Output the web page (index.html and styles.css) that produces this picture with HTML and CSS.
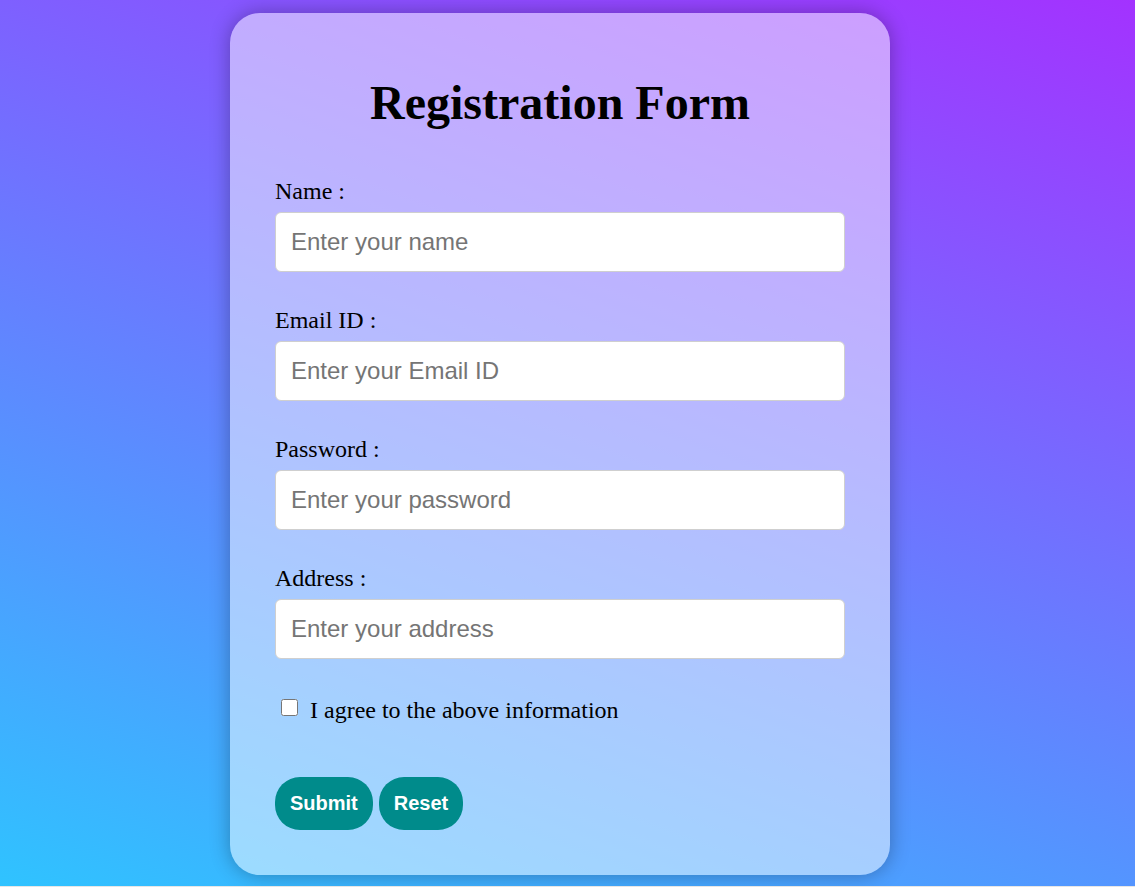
FILE: index.html
```html
<!DOCTYPE html>
<html>
<head>
<meta charset="utf-8">
<title>Registration Form</title>
<link rel="stylesheet" href="styles.css">
</head>
<body>
<div class="card">
  <h1 class="title">Registration Form</h1>
  <form class="form">
    <div class="field">
      <label class="label" for="name">Name :</label>
      <input class="input" id="name" type="text" placeholder="Enter your name">
    </div>
    <div class="field">
      <label class="label" for="email">Email ID :</label>
      <input class="input" id="email" type="text" placeholder="Enter your Email ID">
    </div>
    <div class="field">
      <label class="label" for="pass">Password :</label>
      <input class="input" id="pass" type="password" placeholder="Enter your password">
    </div>
    <div class="field">
      <label class="label" for="addr">Address :</label>
      <input class="input" id="addr" type="text" placeholder="Enter your address">
    </div>
    <div class="agree">
      <input class="check" id="agree" type="checkbox">
      <label class="agree-text" for="agree">I agree to the above information</label>
    </div>
    <div class="actions">
      <button class="btn" type="button">Submit</button>
      <button class="btn" type="button">Reset</button>
    </div>
  </form>
</div>
</body>
</html>
```
FILE: styles.css
```css
html {
  margin: 0;
  padding: 0;
  background: #e6e6e6;
}
body {
  margin: 0;
  height: 886px;
  background: linear-gradient(20deg, #2fc3ff, #a332ff);
  font-family: "Liberation Serif", "Times New Roman", serif;
  padding: 13px 15px 0 0;
  box-sizing: border-box;
}
.card {
  width: 660px;
  height: 862px;
  box-sizing: border-box;
  margin: 0 auto;
  padding: 30px 45px 45px;
  border-radius: 30px;
  background: rgba(255, 255, 255, 0.5);
  box-shadow: 0 0 20px rgba(0, 0, 0, 0.3);
}
.title {
  margin: 32px 0 47px;
  text-align: center;
  font-size: 48px;
  font-weight: bold;
  color: #000;
}
.form {
  display: flex;
  flex-direction: column;
}
.field {
  display: flex;
  flex-direction: column;
  margin-bottom: 34px;
}
.label {
  font-size: 24px;
  line-height: 28px;
  color: #000;
  margin-bottom: 7px;
}
.input {
  height: 60px;
  box-sizing: border-box;
  padding: 0 15px;
  border: 1px solid #cfcfcf;
  border-radius: 6px;
  background: #fff;
  font-family: "Liberation Sans", Arial, sans-serif;
  font-size: 24px;
  color: #333;
  outline: none;
}
.input::placeholder {
  color: #757575;
}
.agree {
  display: flex;
  align-items: flex-start;
  gap: 12px;
  padding-left: 6px;
  margin-top: 3px;
}
.check {
  width: 17px;
  height: 17px;
  margin: 3px 0 0;
}
.agree-text {
  font-size: 24px;
  line-height: 28px;
  color: #000;
}
.actions {
  display: flex;
  gap: 6px;
  margin-top: 53px;
}
.btn {
  height: 53px;
  padding: 0 15px;
  border: none;
  border-radius: 25px;
  background: #008b8b;
  color: #fff;
  font-family: "Liberation Sans", Arial, sans-serif;
  font-weight: bold;
  font-size: 20px;
  cursor: pointer;
}
```
